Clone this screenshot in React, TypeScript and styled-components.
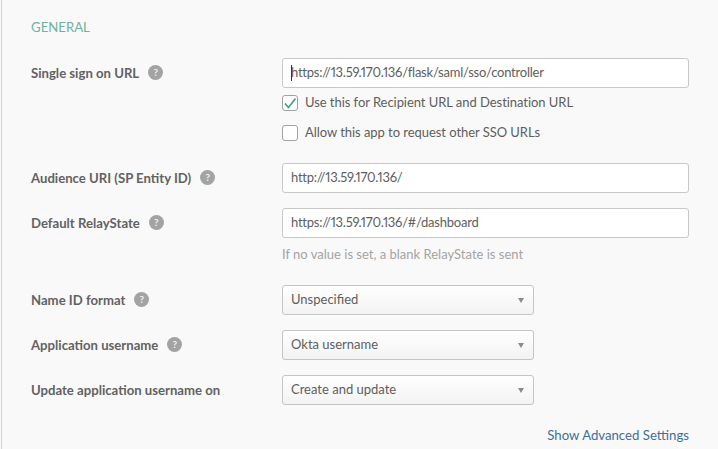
import styled, { createGlobalStyle } from "styled-components"

const GlobalStyle = createGlobalStyle`
  html, body {
    margin: 0;
    padding: 0;
    background: #f9f9f9;
    overflow: hidden;
  }
`

const Panel = styled.div`
  box-sizing: border-box;
  width: 717px;
  height: 449px;
  margin-left: 1px;
  padding: 18px 29px 0 29px;
  border-left: 1px solid #d4d4d4;
  background: #f9f9f9;
  font-family: Lato, "Open Sans", sans-serif;
  font-size: 13px;
  font-variant-numeric: proportional-nums;
  color: #5e5e5e;
  overflow: hidden;
`

const Heading = styled.h2`
  margin: 0 0 21px;
  font-size: 13.2px;
  line-height: 19px;
  font-weight: 400;
  color: #6fb39b;
`

const Row = styled.div<{ $gap?: number }>`
  display: grid;
  grid-template-columns: 251px 407px;
  margin-bottom: ${p => p.$gap ?? 15}px;
`

const Label = styled.label`
  display: flex;
  align-items: center;
  gap: 9px;
  box-sizing: border-box;
  height: 30px;
  padding-bottom: 1px;
  font-size: 13.15px;
  font-weight: 700;
  color: #626262;
`

const Help = styled.span`
  width: 15px;
  height: 15px;
  border-radius: 50%;
  background: #a3a3a3;
  color: #f0f0f0;
  font-size: 10px;
  font-weight: 700;
  line-height: 15px;
  text-align: center;
`

const FieldWrap = styled.div`
  position: relative;
`

const Field = styled.input`
  display: block;
  box-sizing: border-box;
  width: 407px;
  height: 30px;
  padding: 0 8px 2px;
  border: 1px solid #c8c8c8;
  border-radius: 3px;
  background: #fff;
  font: inherit;
  font-variant-numeric: proportional-nums;
  letter-spacing: -0.23px;
  color: #5e5e5e;
  outline: none;
`

const Caret = styled.span`
  position: absolute;
  top: 7px;
  left: 9px;
  width: 1px;
  height: 16px;
  background: #333;
`

const CheckRow = styled.label`
  display: flex;
  align-items: center;
  gap: 7px;
  height: 16px;
  margin-top: 14px;
  letter-spacing: -0.05px;

  &:first-of-type {
    margin-top: 7px;
  }
`

const CheckBox = styled.span`
  display: flex;
  align-items: center;
  justify-content: center;
  box-sizing: border-box;
  width: 16px;
  height: 16px;
  border: 1px solid #a2a2a2;
  border-radius: 3px;
  background: #fff;
`

const CheckText = styled.span`
  margin-top: -2px;
`

const Hint = styled.div`
  margin-top: 8px;
  line-height: 17px;
  color: #a4a4a4;
`

const Select = styled.div`
  display: flex;
  align-items: center;
  justify-content: space-between;
  box-sizing: border-box;
  width: 252px;
  height: 30px;
  padding: 0 9px 2px 8px;
  border: 1px solid #c4c4c4;
  border-radius: 3px;
  background: linear-gradient(#ffffff, #f3f3f3);
`

const Arrow = styled.span`
  width: 0;
  height: 0;
  margin-top: 2px;
  border-left: 3.5px solid transparent;
  border-right: 3.5px solid transparent;
  border-top: 5px solid #8a8a8a;
`

const Footer = styled.div`
  display: flex;
  justify-content: flex-end;
  margin-top: 22px;
`

const AdvancedLink = styled.a`
  color: #3f6f9c;
  font-size: 13.2px;
  line-height: 17px;
  text-decoration: none;
`

function LabelText({ text, help = true }: { text: string; help?: boolean }) {
  return (
    <Label>
      {text}
      {help && <Help>?</Help>}
    </Label>
  )
}

const selects = [
  { label: "Name ID format", value: "Unspecified", help: true },
  { label: "Application username", value: "Okta username", help: true },
  { label: "Update application username on", value: "Create and update", help: false },
]

export default function App() {
  return (
    <Panel>
      <GlobalStyle />
      <Heading>GENERAL</Heading>

      <Row $gap={22}>
        <LabelText text="Single sign on URL" />
        <div>
          <FieldWrap>
            <Field readOnly value="https://13.59.170.136/flask/saml/sso/controller" />
            <Caret />
          </FieldWrap>
          <CheckRow>
            <CheckBox>
              <svg width="14" height="14" viewBox="0 0 14 14" fill="none">
                <path d="M2 7.5 L5.5 11.5 L12.5 2.5" stroke="#3f9f83" strokeWidth="1.6" />
              </svg>
            </CheckBox>
            <CheckText>Use this for Recipient URL and Destination URL</CheckText>
          </CheckRow>
          <CheckRow>
            <CheckBox />
            <CheckText>Allow this app to request other SSO URLs</CheckText>
          </CheckRow>
        </div>
      </Row>

      <Row>
        <LabelText text="Audience URI (SP Entity ID)" />
        <Field readOnly value="http://13.59.170.136/" />
      </Row>

      <Row $gap={22}>
        <LabelText text="Default RelayState" />
        <div>
          <Field readOnly value="https://13.59.170.136/#/dashboard" />
          <Hint>If no value is set, a blank RelayState is sent</Hint>
        </div>
      </Row>

      {selects.map(s => (
        <Row key={s.label}>
          <LabelText text={s.label} help={s.help} />
          <Select>
            {s.value}
            <Arrow />
          </Select>
        </Row>
      ))}

      <Footer>
        <AdvancedLink href="#">Show Advanced Settings</AdvancedLink>
      </Footer>
    </Panel>
  )
}
